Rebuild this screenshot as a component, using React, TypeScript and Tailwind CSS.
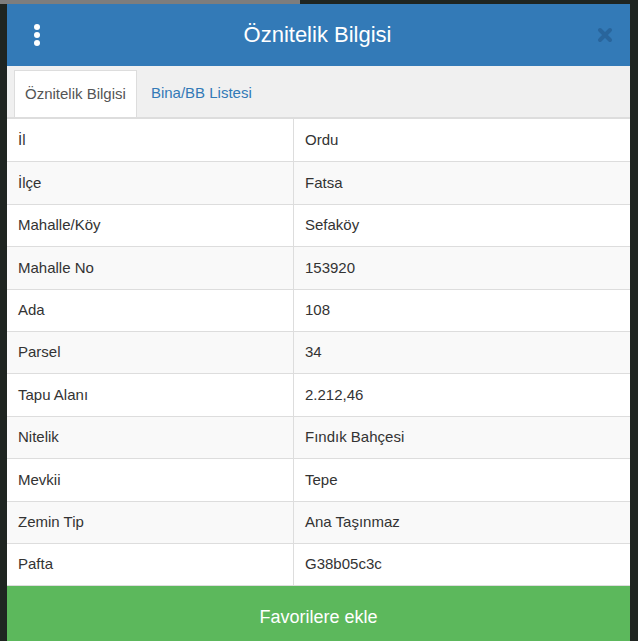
import React, { useState } from 'react';

const rows = [
  { label: 'İl', value: 'Ordu' },
  { label: 'İlçe', value: 'Fatsa' },
  { label: 'Mahalle/Köy', value: 'Sefaköy' },
  { label: 'Mahalle No', value: '153920' },
  { label: 'Ada', value: '108' },
  { label: 'Parsel', value: '34' },
  { label: 'Tapu Alanı', value: '2.212,46' },
  { label: 'Nitelik', value: 'Fındık Bahçesi' },
  { label: 'Mevkii', value: 'Tepe' },
  { label: 'Zemin Tip', value: 'Ana Taşınmaz' },
  { label: 'Pafta', value: 'G38b05c3c' },
];

const App = () => {
  const [tab, setTab] = useState(0);

  return (
    <div className="h-[641px] w-[638px] overflow-hidden bg-[#1f2521] font-['Liberation_Sans',Arial,sans-serif]">
      <div className="h-[4px] w-[300px] bg-[#7d7d7d]" />
      <div className="ml-[7px] w-[623px] bg-white">
        {/* Header */}
        <div className="flex h-[62px] items-center bg-[#337ab7] pl-[27px] pr-[17px] text-white">
          <button className="flex w-[16px] flex-col gap-[2px]" aria-label="Menu">
            <span className="block h-[6px] w-[6px] rounded-full bg-white" />
            <span className="block h-[6px] w-[6px] rounded-full bg-white" />
            <span className="block h-[6px] w-[6px] rounded-full bg-white" />
          </button>
          <h1 className="flex-1 pr-[12px] text-center text-[22px] leading-none">Öznitelik Bilgisi</h1>
          <button aria-label="Kapat">
            <svg width="16" height="16" viewBox="0 0 16 16">
              <path d="M3 3 L13 13 M13 3 L3 13" stroke="#29659c" strokeWidth="4" strokeLinecap="round" />
            </svg>
          </button>
        </div>

        {/* Tabs */}
        <div className="flex h-[53px] items-end border-b-2 border-[#dddddd] bg-[#f0f0f0] pl-[7px]">
          {['Öznitelik Bilgisi', 'Bina/BB Listesi'].map((t, i) => (
            <button
              key={t}
              onClick={() => setTab(i)}
              className={`flex h-[47px] items-center px-[10px] text-[15px] ${
                tab === i
                  ? 'border border-b-0 border-[#dddddd] bg-white text-[#555555]'
                  : 'ml-[4px] text-[#337ab7]'
              }`}
            >
              {t}
            </button>
          ))}
        </div>

        {/* Table */}
        <div className="border-b border-[#dddddd]">
          {rows.map((r, i) => (
            <div
              key={r.label}
              className={`flex h-[42.4px] text-[15px] text-[#333333] ${i > 0 ? 'border-t border-[#dddddd]' : ''} ${
                i % 2 === 1 ? 'bg-[#f9f9f9]' : 'bg-white'
              }`}
            >
              <div className="flex w-[287px] items-center border-r border-[#dddddd] pl-[11px]">{r.label}</div>
              <div className="flex flex-1 items-center pl-[11px]">{r.value}</div>
            </div>
          ))}
        </div>

        <button className="flex h-[60px] w-full items-start justify-center bg-[#5cb85c] pt-[20px] text-[18px] leading-[22px] text-white">
          Favorilere ekle
        </button>
      </div>
    </div>
  );
};

export default App;
